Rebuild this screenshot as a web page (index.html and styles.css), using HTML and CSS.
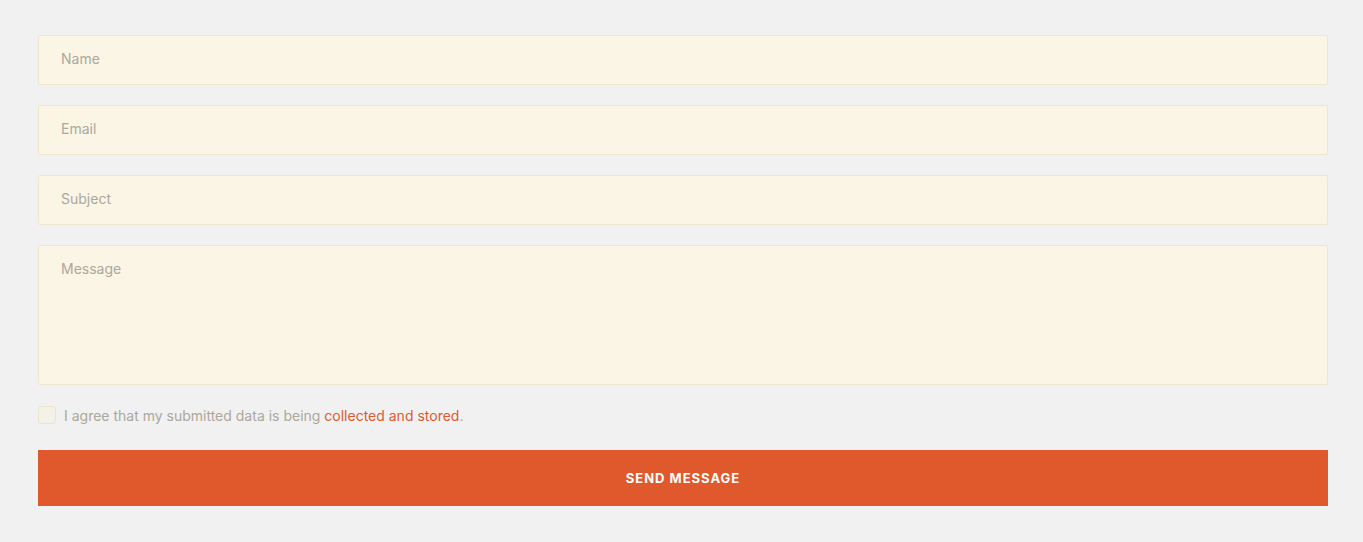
FILE: index.html
```html
<!DOCTYPE html>
<html>
<head>
<meta charset="utf-8">
<link rel="stylesheet" href="styles.css">
</head>
<body>
<form class="form">
  <input class="field" type="text" placeholder="Name">
  <input class="field" type="email" placeholder="Email">
  <input class="field" type="text" placeholder="Subject">
  <textarea class="field area" placeholder="Message"></textarea>
  <label class="agree">
    <span class="box"></span>
    <span class="agree-text">I agree that my submitted data is being <a class="link" href="#">collected and stored</a>.</span>
  </label>
  <button class="send" type="button">SEND MESSAGE</button>
</form>
</body>
</html>
```
FILE: styles.css
```css
* { box-sizing: border-box; }
html, body { margin: 0; background: #f1f1f1; }
body { font-family: Inter, "Open Sans", sans-serif; }
.form {
  display: flex;
  flex-direction: column;
  gap: 20px;
  padding: 35px 35px 36px 38px;
}
.field {
  display: block;
  width: 100%;
  height: 50px;
  margin: 0;
  padding: 0 22px 3px;
  background: #fbf5e5;
  border: 1px solid #efe6cd;
  border-radius: 2px;
  font-family: inherit;
  font-size: 14px;
  color: #555;
  outline: none;
}
.field::placeholder { color: #aba89d; }
.area {
  height: 140px;
  padding-top: 14px;
  resize: none;
}
.agree {
  display: flex;
  align-items: center;
  gap: 8px;
  height: 20px;
  font-size: 14px;
  color: #aba89d;
}
.box {
  width: 18px;
  height: 18px;
  border: 1px solid #ebe4cc;
  border-radius: 4px;
  background: #f3f1e8;
  flex: none;
}
.link { color: #e05a2e; text-decoration: none; }
.send {
  height: 56px;
  margin-top: 5px;
  width: 100%;
  border: 0;
  background: #e0592d;
  color: #fff;
  font-family: inherit;
  font-size: 13px;
  font-weight: 700;
  letter-spacing: 1px;
  cursor: pointer;
}
```
